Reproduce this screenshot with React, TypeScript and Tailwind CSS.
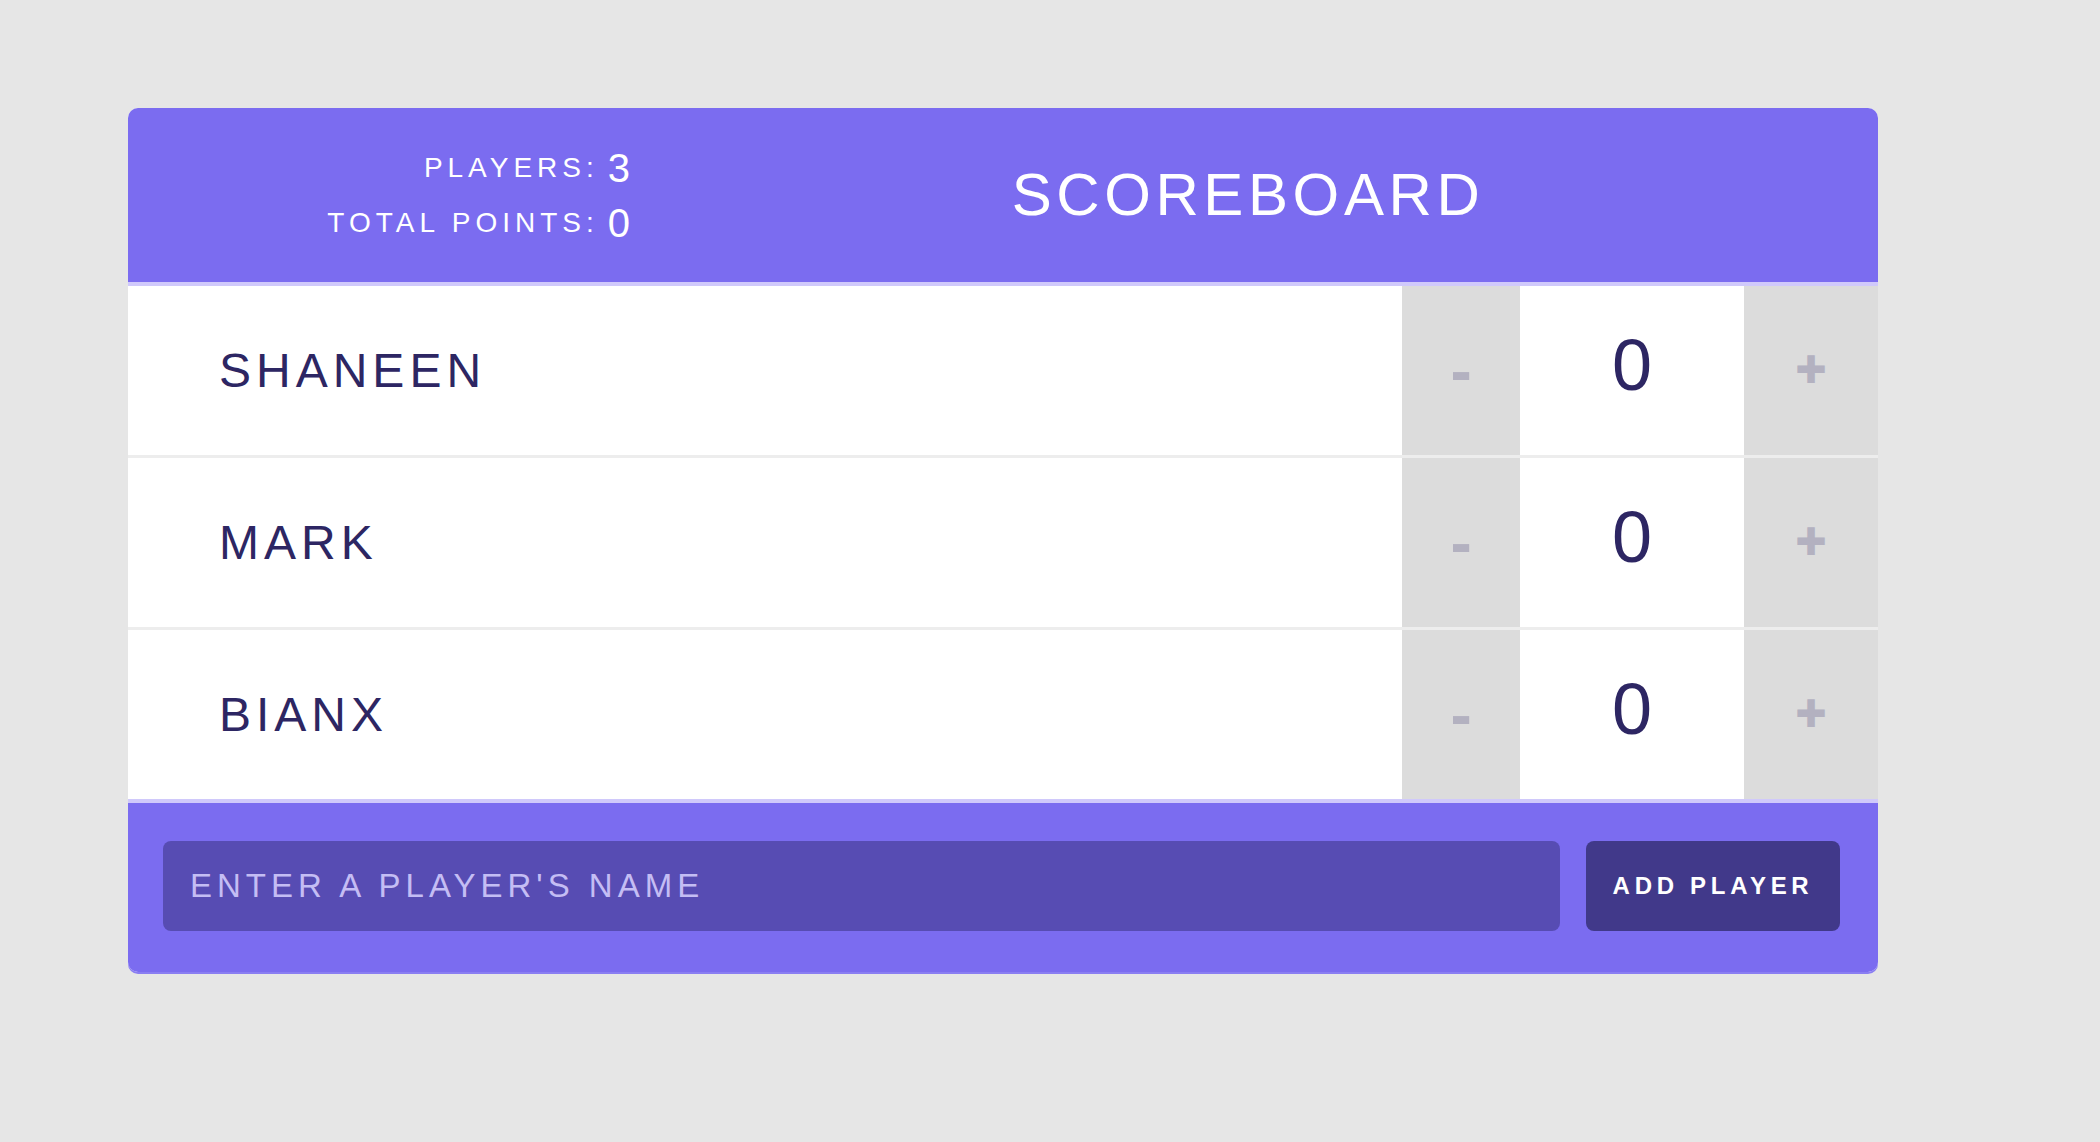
const players = [
  { name: "Shaneen", score: 0 },
  { name: "Mark", score: 0 },
  { name: "Bianx", score: 0 },
];

const font = { fontFamily: '"Liberation Sans", Arial, sans-serif' };

const Stat = ({ label, value }: { label: string; value: number }) => (
  <div className="flex h-[55px] items-center justify-end gap-[9px]">
    <span className="text-[28px] uppercase tracking-[5px] text-white">{label}:</span>
    <span className="text-[40px] leading-none text-white">{value}</span>
  </div>
);

const PlayerRow = ({ name, score, last }: { name: string; score: number; last: boolean }) => (
  <div className={`flex ${last ? "h-[169px]" : "h-[172px] border-b-[3px] border-[#ededed]"}`}>
    <div className="flex flex-1 items-center pl-[91px] text-[48px] uppercase tracking-[5px] text-[#2d2663]">
      {name}
    </div>
    <button className="flex w-[118px] items-center justify-center bg-[#dcdcdc] pt-[2px] text-[50px] leading-none text-[#b3b1c0] [-webkit-text-stroke:4px_#b3b1c0]">
      -
    </button>
    <div className="flex w-[224px] items-center justify-center pb-[12px] text-[72px] text-[#2d2663]">
      {score}
    </div>
    <button className="flex w-[134px] items-center justify-center bg-[#dcdcdc] pb-[4px] text-[48px] leading-none text-[#b3b1c0] [-webkit-text-stroke:4px_#b3b1c0]">
      +
    </button>
  </div>
);

export default function App() {
  const total = players.reduce((sum, p) => sum + p.score, 0);

  return (
    <div className="min-h-screen bg-[#e6e6e6] pt-[108px] pl-[128px]" style={font}>
      <div className="w-[1750px] overflow-hidden rounded-[10px] bg-white shadow-[0_2px_0_#8a7ef2]">
        {/* Header */}
        <header className="flex h-[178px] items-center border-b-4 border-[#d0c9fb] bg-[#7b6cf0]">
          <div className="flex w-[502px] flex-col justify-center">
            <Stat label="Players" value={players.length} />
            <Stat label="Total Points" value={total} />
          </div>
          <h1 className="flex-1 pr-[12px] text-center text-[60px] uppercase tracking-[4.6px] text-white">
            Scoreboard
          </h1>
        </header>

        {/* Players */}
        {players.map((p, i) => (
          <PlayerRow key={p.name} name={p.name} score={p.score} last={i === players.length - 1} />
        ))}

        {/* Add player */}
        <form className="flex gap-[26px] border-t-4 border-[#d0c9fb] bg-[#7b6cf0] pt-[38px] pr-[38px] pb-[41px] pl-[35px]">
          <input
            type="text"
            placeholder="Enter a player's name"
            className="h-[90px] flex-1 rounded-[8px] bg-[#574cb3] pl-[27px] text-[33px] uppercase tracking-[5px] text-white outline-none placeholder:text-[#c4bdf4]"
            style={font}
          />
          <button
            type="button"
            className="h-[90px] w-[254px] rounded-[8px] bg-[#41398a] text-[24px] font-bold uppercase tracking-[4.7px] text-white"
            style={font}
          >
            Add Player
          </button>
        </form>
      </div>
    </div>
  );
}
